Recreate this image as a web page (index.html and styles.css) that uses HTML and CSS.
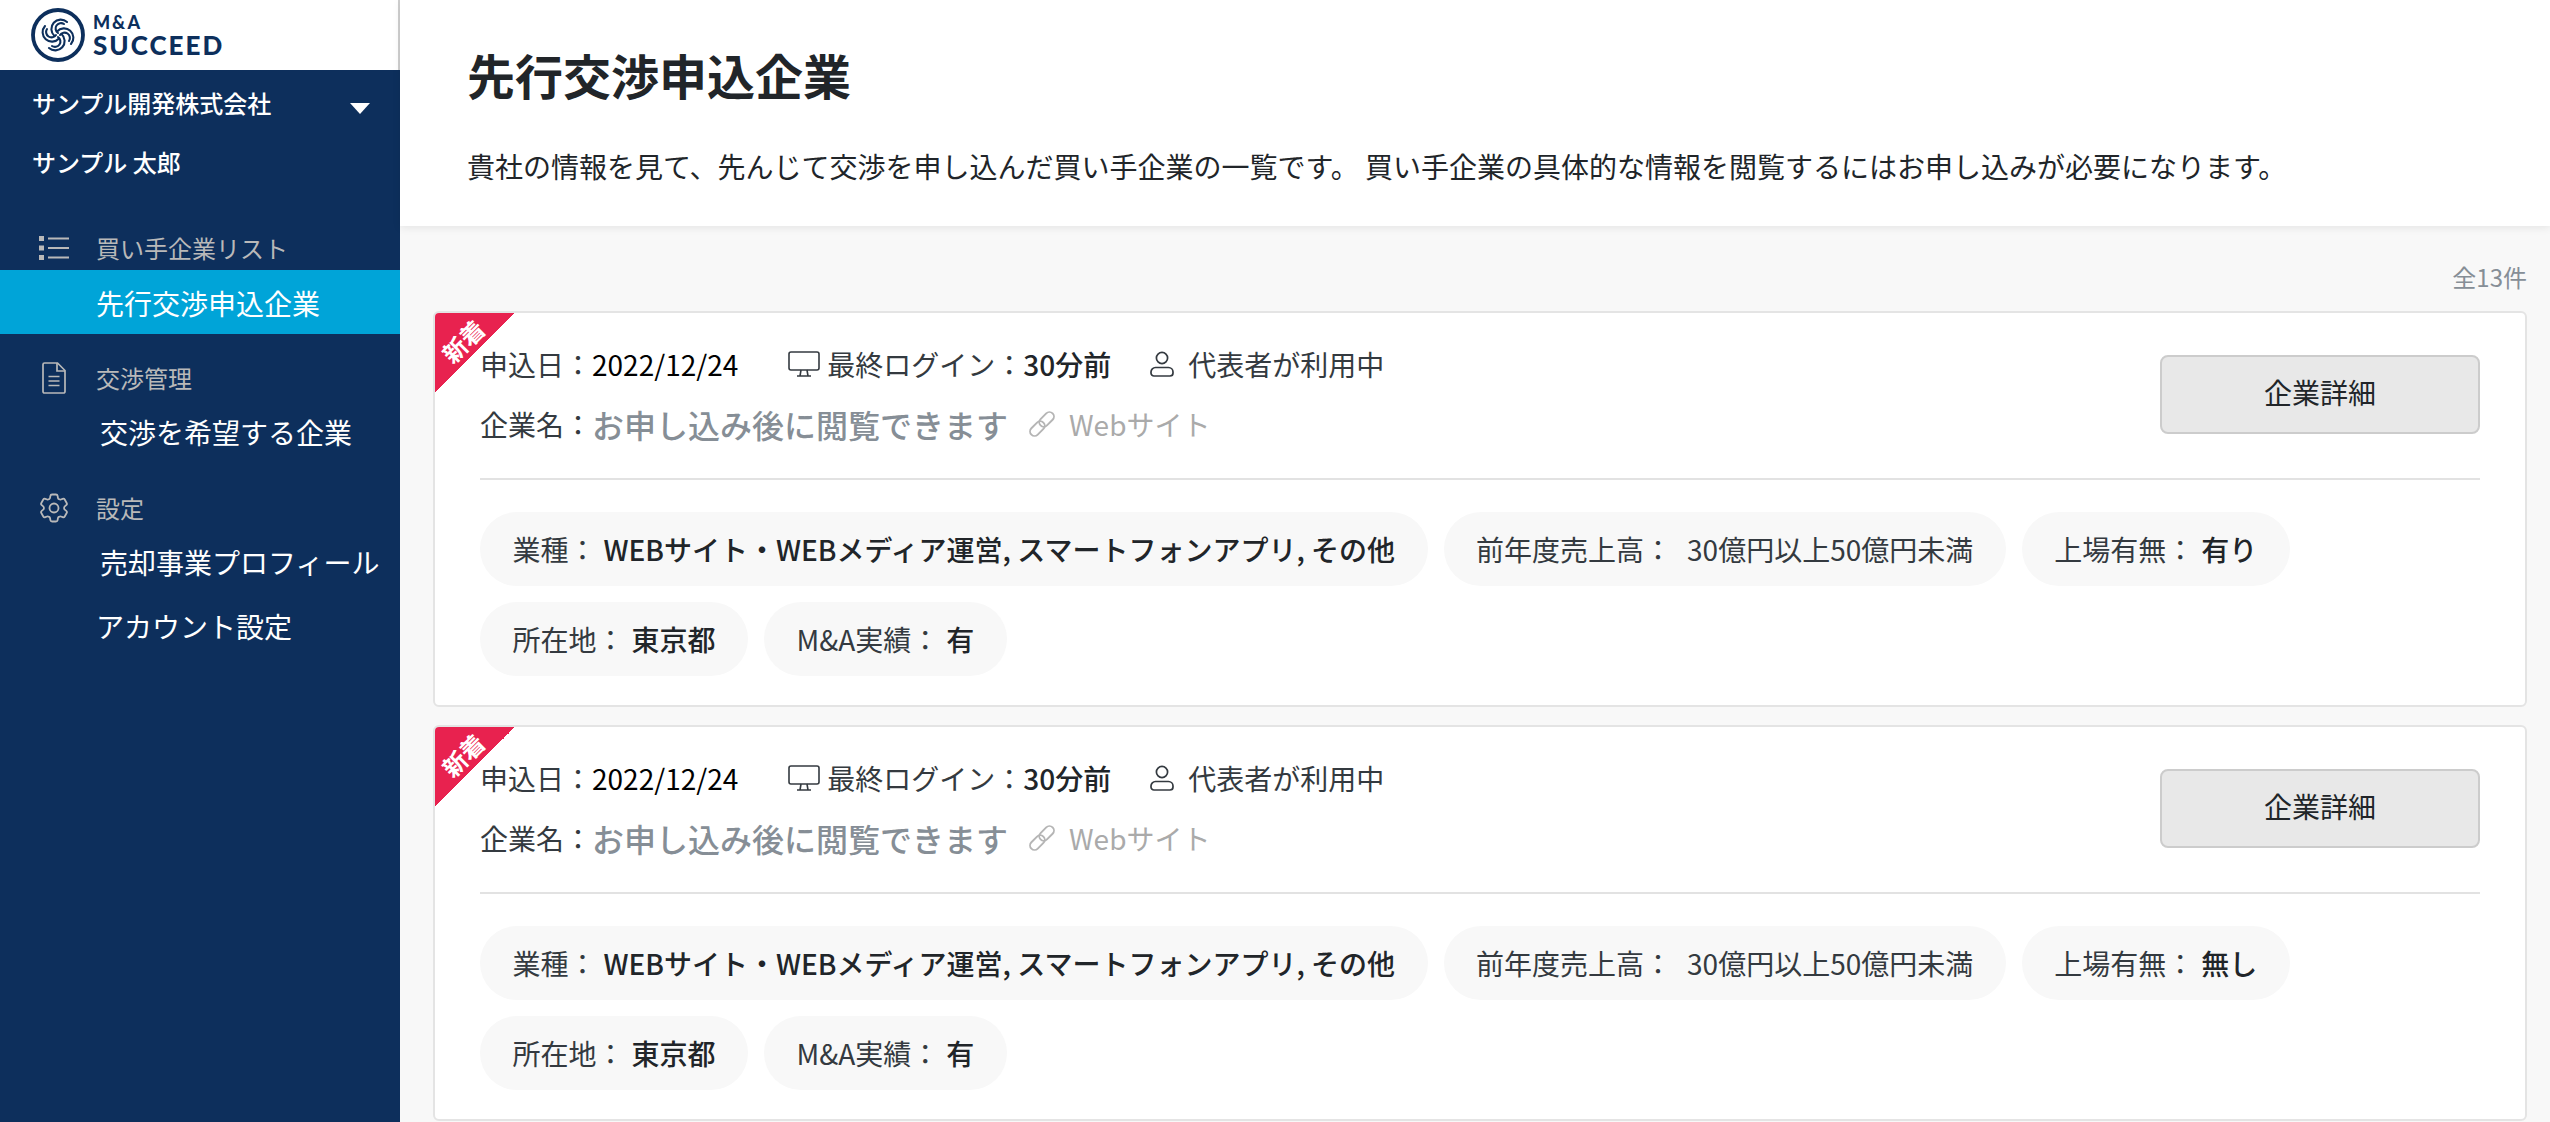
FILE: index.html
```html
<!DOCTYPE html>
<html lang="ja">
<head>
<meta charset="utf-8">
<title>先行交渉申込企業</title>
<link rel="stylesheet" href="styles.css">
</head>
<body>
<svg class="defs" width="0" height="0" aria-hidden="true">
  <defs>
    <symbol id="i-monitor" viewBox="0 0 32 26">
      <rect x="1" y="1" width="30" height="18" rx="2" fill="none" stroke="currentColor" stroke-width="1.6"/>
      <path d="M13 19l-1 6M19 19l1 6M9 25h14" fill="none" stroke="currentColor" stroke-width="1.6"/>
    </symbol>
    <symbol id="i-user" viewBox="0 0 24 26">
      <circle cx="12" cy="7" r="5.6" fill="none" stroke="currentColor" stroke-width="1.7"/>
      <path d="M5.5 16.5h13a4.5 4.5 0 0 1 4.5 4.5v1a3 3 0 0 1-3 3H4a3 3 0 0 1-3-3v-1a4.500 4.500 0 0 1 4.500-4.500z" fill="none" stroke="currentColor" stroke-width="1.7"/>
    </symbol>
    <symbol id="i-link" viewBox="0 0 28 28">
      <g fill="none" stroke="currentColor" stroke-width="1.9" transform="rotate(-45 14 14)">
        <rect x="-1" y="9.500" width="17" height="9" rx="4.500"/>
        <rect x="12" y="9.500" width="17" height="9" rx="4.500"/>
      </g>
    </symbol>
  </defs>
</svg>

<aside class="sidebar">
  <div class="brand">
    <svg class="brand-mark" viewBox="-27 -27 54 54" aria-hidden="true">
      <circle r="25" fill="none" stroke="#0d2f5c" stroke-width="3.800"/>
      <g fill="none" stroke="#0d2f5c" stroke-width="2.100" stroke-linecap="round">
        <g id="petal">
          <path d="M-3.500 1A8.500 8.500 0 1 1 9 -13"/>
          <path d="M0 -2A4.800 4.800 0 1 1 6 -11"/>
        </g>
        <use href="#petal" transform="rotate(90)"/>
        <use href="#petal" transform="rotate(180)"/>
        <use href="#petal" transform="rotate(270)"/>
      </g>
    </svg>
    <div class="brand-name">
      <span class="brand-top">M&amp;A</span>
      <span class="brand-bottom">SUCCEED</span>
    </div>
  </div>

  <div class="account">
    <div class="account-company">
      <span>サンプル開発株式会社</span>
      <span class="caret"></span>
    </div>
    <div class="account-user">サンプル 太郎</div>
  </div>

  <nav class="nav">
    <section class="nav-group">
      <div class="nav-label">
        <svg class="nav-icon" viewBox="0 0 30 24" aria-hidden="true">
          <g fill="#b9b9b9">
            <rect x="0" y="0" width="5" height="5"/>
            <rect x="0" y="9.500" width="5" height="5"/>
            <rect x="0" y="19" width="5" height="5"/>
            <rect x="9" y="1.500" width="21" height="2"/>
            <rect x="9" y="11" width="21" height="2"/>
            <rect x="9" y="20.500" width="21" height="2"/>
          </g>
        </svg>
        <span>買い手企業リスト</span>
      </div>
      <a class="nav-item nav-item-active">先行交渉申込企業</a>
    </section>
    <section class="nav-group">
      <div class="nav-label">
        <svg class="nav-icon nav-icon-doc" viewBox="0 0 24 32" aria-hidden="true">
          <path d="M2.500 1h13L23 8.500V29.500a1.500 1.500 0 0 1-1.500 1.500h-19A1.500 1.500 0 0 1 1 29.500v-27A1.500 1.500 0 0 1 2.500 1z" fill="none" stroke="#b9b9b9" stroke-width="1.700"/>
          <path d="M15 1v8h8M6.500 14.500h11M6.500 19h11M6.500 23.500h11" fill="none" stroke="#b9b9b9" stroke-width="1.700"/>
        </svg>
        <span>交渉管理</span>
      </div>
      <a class="nav-item nav-item-sub">交渉を希望する企業</a>
    </section>
    <section class="nav-group">
      <div class="nav-label">
        <svg class="nav-icon" viewBox="2 2 20 20" aria-hidden="true">
          <path d="M9.594 3.940c.09-.542.56-.94 1.110-.94h2.593c.55 0 1.020.398 1.110.94l.213 1.281c.063.374.313.686.645.870.074.040.147.083.220.127.325.196.720.257 1.075.124l1.217-.456a1.125 1.125 0 0 1 1.370.490l1.296 2.247a1.125 1.125 0 0 1-.260 1.431l-1.003.827c-.293.241-.438.613-.430.992a7.723 7.723 0 0 1 0 .255c-.008.378.137.750.430.991l1.004.827c.424.350.534.955.260 1.430l-1.298 2.247a1.125 1.125 0 0 1-1.369.491l-1.217-.456c-.355-.133-.750-.072-1.076.124a6.470 6.470 0 0 1-.220.128c-.331.183-.581.495-.644.869l-.213 1.281c-.090.543-.560.940-1.110.940h-2.594c-.550 0-1.019-.398-1.110-.940l-.213-1.281c-.062-.374-.312-.686-.644-.870a6.520 6.520 0 0 1-.220-.127c-.325-.196-.720-.257-1.076-.124l-1.217.456a1.125 1.125 0 0 1-1.369-.490l-1.297-2.247a1.125 1.125 0 0 1 .260-1.431l1.004-.827c.292-.240.437-.613.430-.991a6.932 6.932 0 0 1 0-.255c.007-.380-.138-.751-.430-.992l-1.004-.827a1.125 1.125 0 0 1-.260-1.430l1.297-2.247a1.125 1.125 0 0 1 1.370-.491l1.216.456c.356.133.751.072 1.076-.124.072-.044.146-.086.220-.128.332-.183.582-.495.644-.869l.214-1.280z" fill="none" stroke="#b9b9b9" stroke-width="1.200"/>
          <circle cx="12" cy="12" r="3" fill="none" stroke="#b9b9b9" stroke-width="1.200"/>
        </svg>
        <span>設定</span>
      </div>
      <a class="nav-item nav-item-sub">売却事業プロフィール</a>
      <a class="nav-item">アカウント設定</a>
    </section>
  </nav>
</aside>

<main class="main">
  <header class="page-head">
    <h1 class="page-title">先行交渉申込企業</h1>
    <p class="page-desc">貴社の情報を見て、先んじて交渉を申し込んだ買い手企業の一覧です。 買い手企業の具体的な情報を閲覧するにはお申し込みが必要になります。</p>
  </header>

  <div class="content">
    <div class="count">全13件</div>

    <article class="card">
      <div class="ribbon"><span class="ribbon-text">新着</span></div>
      <div class="card-head">
        <div class="card-info">
          <div class="info-row">
            <span class="info-item"><span class="lbl">申込日：</span><span class="val">2022/12/24</span></span>
            <span class="info-item info-login">
              <svg class="ic ic-monitor"><use href="#i-monitor"/></svg>
              <span class="lbl">最終ログイン：</span><span class="val val-strong">30分前</span>
            </span>
            <span class="info-item info-user">
              <svg class="ic ic-user"><use href="#i-user"/></svg>
              <span class="lbl">代表者が利用中</span>
            </span>
          </div>
          <div class="info-row">
            <span class="lbl">企業名：</span><span class="masked">お申し込み後に閲覧できます</span>
            <svg class="ic ic-link"><use href="#i-link"/></svg>
            <span class="weblink">Webサイト</span>
          </div>
        </div>
        <button class="detail-btn" type="button">企業詳細</button>
      </div>
      <ul class="chips">
        <li class="chip">業種：<b class="chip-val">WEBサイト・WEBメディア運営, スマートフォンアプリ, その他</b></li>
        <li class="chip">前年度売上高：<b class="chip-val chip-val-plain">30億円以上50億円未満</b></li>
        <li class="chip">上場有無：<b class="chip-val">有り</b></li>
        <li class="chip">所在地：<b class="chip-val">東京都</b></li>
        <li class="chip">M&amp;A実績：<b class="chip-val">有</b></li>
      </ul>
    </article>

    <article class="card">
      <div class="ribbon"><span class="ribbon-text">新着</span></div>
      <div class="card-head">
        <div class="card-info">
          <div class="info-row">
            <span class="info-item"><span class="lbl">申込日：</span><span class="val">2022/12/24</span></span>
            <span class="info-item info-login">
              <svg class="ic ic-monitor"><use href="#i-monitor"/></svg>
              <span class="lbl">最終ログイン：</span><span class="val val-strong">30分前</span>
            </span>
            <span class="info-item info-user">
              <svg class="ic ic-user"><use href="#i-user"/></svg>
              <span class="lbl">代表者が利用中</span>
            </span>
          </div>
          <div class="info-row">
            <span class="lbl">企業名：</span><span class="masked">お申し込み後に閲覧できます</span>
            <svg class="ic ic-link"><use href="#i-link"/></svg>
            <span class="weblink">Webサイト</span>
          </div>
        </div>
        <button class="detail-btn" type="button">企業詳細</button>
      </div>
      <ul class="chips">
        <li class="chip">業種：<b class="chip-val">WEBサイト・WEBメディア運営, スマートフォンアプリ, その他</b></li>
        <li class="chip">前年度売上高：<b class="chip-val chip-val-plain">30億円以上50億円未満</b></li>
        <li class="chip">上場有無：<b class="chip-val">無し</b></li>
        <li class="chip">所在地：<b class="chip-val">東京都</b></li>
        <li class="chip">M&amp;A実績：<b class="chip-val">有</b></li>
      </ul>
    </article>
  </div>
</main>
</body>
</html>
```

FILE: styles.css
```css
* { box-sizing: border-box; }

html, body { height: 100%; }

body {
  margin: 0;
  display: flex;
  height: 1122px;
  overflow: hidden;
  background: #f8f8f8;
  color: #212529;
  font-family: "Noto Sans CJK JP", "Noto Sans", sans-serif;
}

.defs { position: absolute; }

/* Sidebar */
.sidebar {
  flex: 0 0 400px;
  background: #0d2f5c;
  color: #fff;
}

.brand {
  height: 70px;
  display: flex;
  align-items: center;
  gap: 8px;
  padding-left: 31px;
  background: #fff;
  border-right: 2px solid #cfcfcf;
}

.brand-mark { width: 54px; height: 54px; flex: none; }

.brand-name {
  display: flex;
  flex-direction: column;
  color: #0d2f5c;
  font-family: Lato, sans-serif;
  font-weight: 900;
}

.brand-top { font-size: 18px; line-height: 19px; letter-spacing: 1.800px; }
.brand-bottom { font-size: 26px; line-height: 26px; letter-spacing: 2px; }

.account { padding: 15px 30px 51px 32px; font-size: 24px; font-weight: 500; }

.account-company {
  height: 36px;
  line-height: 36px;
  display: flex;
  justify-content: space-between;
  align-items: center;
  margin-bottom: 23px;
}

.caret {
  width: 0;
  height: 0;
  margin-top: 11px;
  border-left: 10px solid transparent;
  border-right: 10px solid transparent;
  border-top: 11px solid #fff;
}

.account-user { height: 36px; line-height: 36px; }

.nav { display: flex; flex-direction: column; gap: 27px; }

.nav-label {
  position: relative;
  height: 34px;
  line-height: 34px;
  margin-bottom: 5px;
  padding-left: 96px;
  font-size: 24px;
  color: #b9b9b9;
}

.nav-icon {
  position: absolute;
  left: 39px;
  top: 1px;
  width: 30px;
  height: 32px;
}

.nav-icon-doc { left: 42px; width: 24px; }

.nav-item {
  display: block;
  height: 64px;
  line-height: 64px;
  padding-left: 96px;
  font-size: 28px;
  color: #fff;
}

.nav-item-sub { padding-left: 100px; }
.nav-item-active { background: #00a4d8; line-height: 66px; }

/* Main */
.main { flex: 1; min-width: 0; }

.page-head {
  height: 226px;
  padding: 45px 67px 0;
  background: #fff;
  box-shadow: 0 2px 8px rgba(0, 0, 0, 0.08);
}

.page-title {
  margin: 0 0 43px;
  font-size: 48px;
  line-height: 58px;
  font-weight: 700;
}

.page-desc {
  margin: 0;
  font-size: 28px;
  line-height: 40px;
}

.content { padding: 34px 23px 0 33px; }

.count {
  height: 34px;
  line-height: 34px;
  margin-bottom: 17px;
  text-align: right;
  font-size: 24px;
  color: #868e96;
}

.card {
  position: relative;
  height: 396px;
  margin-bottom: 18px;
  padding: 31px 45px 29px;
  background: #fff;
  border: 2px solid #e4e4e4;
  border-radius: 6px;
}

.ribbon {
  position: absolute;
  left: 0;
  top: 0;
  width: 80px;
  height: 80px;
  border-top-left-radius: 4px;
  background: linear-gradient(135deg, #e8224f 50%, transparent 50%);
}

.ribbon-text {
  position: absolute;
  left: 3px;
  top: 14px;
  width: 50px;
  text-align: center;
  font-size: 24px;
  line-height: 28px;
  font-weight: 700;
  color: #fff;
  transform: rotate(-45deg);
}

.card-head {
  display: flex;
  justify-content: space-between;
  align-items: center;
  padding-bottom: 34px;
  border-bottom: 2px solid #e2e2e2;
}

.card-info { display: flex; flex-direction: column; gap: 20px; }

.info-row {
  display: flex;
  align-items: center;
  height: 40px;
  font-size: 28px;
  line-height: 40px;
}

.info-item { display: flex; align-items: center; }
.info-login { margin-left: 50px; }
.info-user { margin-left: 39px; }

.lbl { color: #343a40; }
.val { color: #000; }
.val-strong { font-weight: 500; color: #212529; }

.masked { font-size: 32px; font-weight: 500; color: #868e96; }

.ic { flex: none; display: block; }
.ic-monitor { width: 32px; height: 26px; margin-right: 7px; color: #343a40; }
.ic-user { width: 24px; height: 26px; margin-right: 14px; color: #343a40; }
.ic-link { width: 28px; height: 28px; margin: 0 13px 0 20px; color: #b5b5b5; }

.weblink { color: #aaaaaa; }

.detail-btn {
  width: 320px;
  height: 79px;
  padding: 0 0 5px;
  background: #e8e8e8;
  border: 2px solid #cccccc;
  border-radius: 8px;
  color: #212529;
  font: inherit;
  font-size: 28px;
}

.chips {
  list-style: none;
  display: flex;
  flex-wrap: wrap;
  gap: 16px;
  margin: 32px 0 0;
  padding: 0;
}

.chip {
  height: 74px;
  line-height: 74px;
  padding: 0 32.500px;
  border-radius: 37px;
  background: #f8f8f8;
  font-size: 28px;
  color: #343a40;
  white-space: nowrap;
}

.chip-val { margin-left: 7px; font-weight: 500; color: #212529; }
.chip-val-plain { margin-left: 15px; font-weight: 400; color: #343a40; }
```
